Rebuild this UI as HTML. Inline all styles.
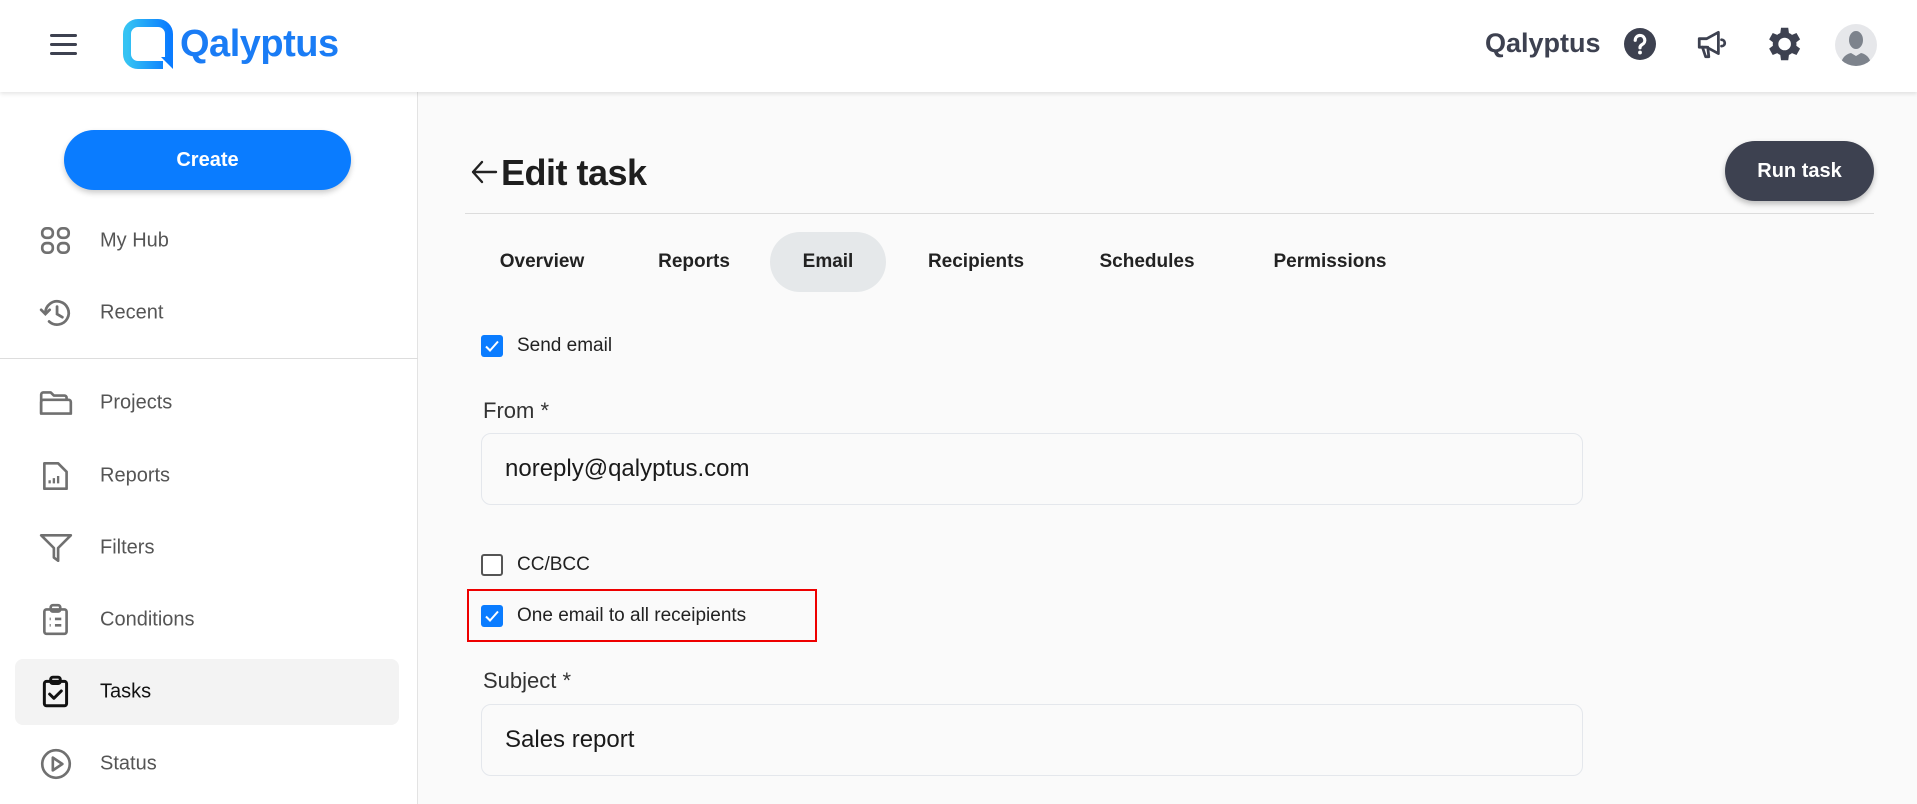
<!DOCTYPE html>
<html><head><meta charset="utf-8"><style>
*{box-sizing:border-box;margin:0;padding:0}
body{width:1917px;height:804px;overflow:hidden;background:#fafafa;font-family:"Liberation Sans",Arial,sans-serif;position:relative}
.abs{position:absolute}
#hdr{left:0;top:0;width:1917px;height:92px;background:#fff;box-shadow:0 2px 4px rgba(0,0,0,.1);z-index:3}
#side{left:0;top:92px;width:418px;height:712px;background:#fff;border-right:1px solid #e3e3e3}
.mi{position:absolute;left:100px;font-size:20px;color:#555;transform:translateY(-50%)}
.ic{position:absolute;left:38px;width:36px;height:36px;transform:translateY(-50%)}
.tab{position:absolute;top:262px;transform:translate(-50%,-50%);font-size:19px;font-weight:bold;color:#222}
.cb{position:absolute;left:481px;width:22px;height:22px;border-radius:3px;transform:translateY(-50%)}
.cb.on{background:#0a7cff}
.cb.off{border:2.5px solid #555;background:#fff}
.lbl{position:absolute;left:517px;font-size:19px;color:#222;transform:translateY(-50%)}
.inp{position:absolute;left:481px;width:1102px;height:72px;border:1.5px solid #e4e7ec;border-radius:10px;background:#fafafa}
.inp span{position:absolute;left:23px;top:50%;transform:translateY(-50%);font-size:24px;color:#1a1a1a}
.fl{position:absolute;left:483px;font-size:22px;color:#333;transform:translateY(-50%)}
</style></head><body>
<div id="hdr" class="abs">
  <div class="abs" style="left:50px;top:34px;width:27px;height:3px;background:#3d4150;border-radius:2px"></div>
  <div class="abs" style="left:50px;top:43px;width:27px;height:3px;background:#3d4150;border-radius:2px"></div>
  <div class="abs" style="left:50px;top:52px;width:27px;height:3px;background:#3d4150;border-radius:2px"></div>
  <svg class="abs" style="left:123px;top:19px" width="52" height="52" viewBox="0 0 52 52">
    <defs><linearGradient id="g" x1="0" x2="1"><stop offset="0" stop-color="#35c3f3"/><stop offset="1" stop-color="#0a7cff"/></linearGradient></defs>
    <path d="M40 46 H15 A11 11 0 0 1 4 35 V15 A11 11 0 0 1 15 4 H35 A11 11 0 0 1 46 15 V38" fill="none" stroke="url(#g)" stroke-width="8"/>
    <path d="M38 38 L50 38 L50 50 Z" fill="#0a7cff"/>
  </svg>
  <div class="abs" style="left:180px;top:23px;font-size:38px;font-weight:bold;color:#1a7cf5;letter-spacing:-0.5px">Qalyptus</div>
  <div class="abs" style="left:1485px;top:28px;font-size:27px;font-weight:bold;color:#3d4150">Qalyptus</div>
  <svg class="abs" style="left:1624px;top:28px" width="32" height="32" viewBox="0 0 30 30"><circle cx="15" cy="15" r="15" fill="#3d4150"/><path d="M10.5 11.5a4.5 4.5 0 1 1 6.5 4c-1.5.8-2 1.5-2 3" fill="none" stroke="#fff" stroke-width="3" stroke-linecap="round"/><circle cx="15" cy="23" r="1.8" fill="#fff"/></svg>
  <svg class="abs" style="left:1695px;top:27px" width="34" height="34" viewBox="0 0 32 32" fill="none" stroke="#3d4150" stroke-width="2.6" stroke-linejoin="round" stroke-linecap="round"><path d="M4 11h7l11-6v20l-11-6H4z"/><path d="M7 19l3 9h3l-1-9"/><path d="M25 12a3 3 0 0 1 0 6"/></svg>
  <svg class="abs" style="left:1765px;top:26px" width="36" height="36" viewBox="2 2 20 20"><path fill="#3d4150" d="M19.4 13a7.5 7.5 0 0 0 0-2l2.1-1.6-2-3.5-2.5 1a7.3 7.3 0 0 0-1.7-1L14.9 3h-4l-.4 2.9a7.3 7.3 0 0 0-1.7 1l-2.5-1-2 3.5L6.4 11a7.5 7.5 0 0 0 0 2l-2.1 1.6 2 3.5 2.5-1c.5.4 1.1.7 1.7 1l.4 2.9h4l.4-2.9c.6-.3 1.2-.6 1.700-1l2.5 1 2-3.5zM12.9 15.5a3.5 3.5 0 1 1 0-7 3.5 3.5 0 0 1 0 7z"/></svg>
  <svg class="abs" style="left:1835px;top:24px" width="42" height="42" viewBox="0 0 42 42"><circle cx="21" cy="21" r="21" fill="#e6e7ea"/><clipPath id="c"><circle cx="21" cy="21" r="21"/></clipPath><g clip-path="url(#c)" fill="#7d838c"><ellipse cx="21" cy="16" rx="7" ry="9"/><path d="M6 42c0-8 5-12 10-13l5 3 5-3c5 1 10 5 10 13z"/></g></svg>
</div>
<div id="side" class="abs"></div>
<div class="abs" style="left:64px;top:130px;width:287px;height:60px;border-radius:30px;background:#0a7cff;box-shadow:0 3px 6px rgba(0,0,0,.2);color:#fff;font-weight:bold;font-size:20px;text-align:center;line-height:60px">Create</div>
<div class="abs" style="left:0;top:358px;width:418px;height:1px;background:#ddd"></div>
<div class="abs" style="left:15px;top:659px;width:384px;height:66px;border-radius:8px;background:#f3f3f3"></div>
<svg class="ic" style="top:241px" viewBox="0 0 34 34" fill="none" stroke="#707070" stroke-width="2.5"><rect x="4" y="5" width="10" height="9" rx="4"/><rect x="19" y="5" width="10" height="9" rx="4"/><rect x="4" y="19" width="10" height="9" rx="4"/><rect x="19" y="19" width="10" height="9" rx="4"/></svg>
<div class="mi" style="top:241px">My Hub</div>
<svg class="ic" style="top:313px" viewBox="0 0 34 34" fill="none" stroke="#707070" stroke-width="2.6" stroke-linecap="round"><path d="M7 17a11 11 0 1 1 3.5 8"/><path d="M3 14l4 4 4-4"/><path d="M18 11v7l5 3"/></svg>
<div class="mi" style="top:313px">Recent</div>
<svg class="ic" style="top:403px" viewBox="0 0 34 34" fill="none" stroke="#707070" stroke-width="2.5" stroke-linejoin="round"><path d="M3 27V9a2 2 0 0 1 2-2h7l3 3h10a2 2 0 0 1 2 2v2"/><path d="M3 27V16a2 2 0 0 1 2-2h24a2 2 0 0 1 2 2v11z"/></svg>
<div class="mi" style="top:403px">Projects</div>
<svg class="ic" style="top:476px" viewBox="0 0 34 34" fill="none" stroke="#707070" stroke-width="2.5" stroke-linejoin="round"><path d="M6 5h13l8 8v16H6z"/><path d="M11 24v-3M15 24v-5M19 24v-7" stroke-width="2.2"/></svg>
<div class="mi" style="top:476px">Reports</div>
<svg class="ic" style="top:548px" viewBox="0 0 34 34" fill="none" stroke="#707070" stroke-width="2.5" stroke-linejoin="round"><path d="M3 5h28L19 17v12l-4-3V17z"/></svg>
<div class="mi" style="top:548px">Filters</div>
<svg class="ic" style="top:620px" viewBox="0 0 34 34" fill="none" stroke="#707070" stroke-width="2.5" stroke-linejoin="round"><rect x="6" y="7" width="21" height="23" rx="2"/><rect x="12" y="3" width="9" height="6" rx="2"/><path d="M11 16h1M11 22h1M16 16h6M16 22h6"/></svg>
<div class="mi" style="top:620px">Conditions</div>
<svg class="ic" style="top:692px" viewBox="0 0 34 34" fill="none" stroke="#111" stroke-width="2.8" stroke-linejoin="round" stroke-linecap="round"><rect x="6" y="7" width="21" height="23" rx="2"/><rect x="12" y="3" width="9" height="6" rx="2"/><path d="M11 19l4 4 7-7"/></svg>
<div class="mi" style="top:692px;color:#111">Tasks</div>
<svg class="ic" style="top:764px" viewBox="0 0 34 34" fill="none" stroke="#707070" stroke-width="2.5" stroke-linejoin="round"><circle cx="17" cy="17" r="13"/><path d="M14 11v12l9-6z"/></svg>
<div class="mi" style="top:764px">Status</div>

<svg class="abs" style="left:470px;top:159px" width="28" height="26" viewBox="0 0 28 26" fill="none" stroke="#222" stroke-width="2.4" stroke-linecap="round" stroke-linejoin="round"><path d="M26 13H3M12 3L3 13l9 10"/></svg>
<div class="abs" style="left:501px;top:152px;font-size:36px;font-weight:bold;color:#1e1e1e;letter-spacing:-0.5px">Edit task</div>
<div class="abs" style="left:1725px;top:141px;width:149px;height:60px;border-radius:30px;background:#3d4150;box-shadow:0 3px 6px rgba(0,0,0,.25);color:#fff;font-weight:bold;font-size:20px;text-align:center;line-height:60px">Run task</div>
<div class="abs" style="left:465px;top:213px;width:1409px;height:1px;background:#dcdcdc"></div>
<div class="abs" style="left:770px;top:232px;width:116px;height:60px;border-radius:30px;background:#e5e8ea"></div>
<div class="tab" style="left:542px">Overview</div>
<div class="tab" style="left:694px">Reports</div>
<div class="tab" style="left:828px">Email</div>
<div class="tab" style="left:976px">Recipients</div>
<div class="tab" style="left:1147px">Schedules</div>
<div class="tab" style="left:1330px">Permissions</div>

<div class="cb on" style="top:346px"><svg width="22" height="22" viewBox="0 0 22 22"><path d="M5 11.5l4 4 8-9" fill="none" stroke="#fff" stroke-width="2"/></svg></div>
<div class="lbl" style="top:346px">Send email</div>
<div class="fl" style="top:411px">From *</div>
<div class="inp" style="top:433px"><span>noreply@qalyptus.com</span></div>
<div class="cb off" style="top:565px"></div>
<div class="lbl" style="top:565px">CC/BCC</div>
<div class="abs" style="left:467px;top:589px;width:350px;height:53px;border:2px solid #e00"></div>
<div class="cb on" style="top:616px"><svg width="22" height="22" viewBox="0 0 22 22"><path d="M5 11.5l4 4 8-9" fill="none" stroke="#fff" stroke-width="2"/></svg></div>
<div class="lbl" style="top:616px">One email to all receipients</div>
<div class="fl" style="top:681px">Subject *</div>
<div class="inp" style="top:704px"><span>Sales report</span></div>
</body></html>
